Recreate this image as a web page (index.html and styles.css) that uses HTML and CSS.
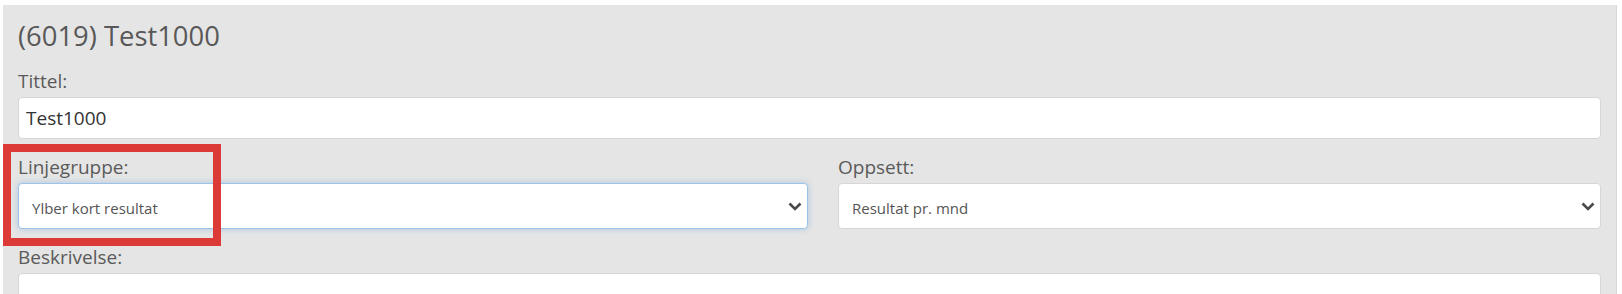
FILE: index.html
```html
<!DOCTYPE html>
<html lang="no">
<head>
<meta charset="utf-8">
<title>(6019) Test1000</title>
<link rel="stylesheet" href="styles.css">
</head>
<body>
<div class="panel">
  <h3 class="title">(6019) Test1000</h3>
  <div class="field">
    <label class="label" for="tittel">Tittel:</label>
    <input class="input" id="tittel" type="text" value="Test1000">
  </div>
  <div class="row">
    <div class="field">
      <label class="label" for="linjegruppe">Linjegruppe:</label>
      <div class="select-wrap focused">
        <select class="select" id="linjegruppe">
          <option>Ylber kort resultat</option>
        </select>
        <svg class="chevron" width="14" height="9" viewBox="0 0 14 9"><path d="M1.5 1.5 L7 7 L12.5 1.5" fill="none" stroke="#4a4a4a" stroke-width="2.6"/></svg>
      </div>
    </div>
    <div class="field">
      <label class="label" for="oppsett">Oppsett:</label>
      <div class="select-wrap">
        <select class="select" id="oppsett">
          <option>Resultat pr. mnd</option>
        </select>
        <svg class="chevron" width="14" height="9" viewBox="0 0 14 9"><path d="M1.5 1.5 L7 7 L12.5 1.5" fill="none" stroke="#4a4a4a" stroke-width="2.6"/></svg>
      </div>
    </div>
  </div>
  <div class="field">
    <label class="label" for="beskrivelse">Beskrivelse:</label>
    <textarea class="textarea" id="beskrivelse"></textarea>
  </div>
  <div class="highlight"></div>
</div>
</body>
</html>
```

FILE: styles.css
```css
* { box-sizing: border-box; }
html, body { margin: 0; padding: 0; background: #ffffff; overflow: hidden; }
body { font-family: "Open Sans", "Noto Sans", sans-serif; }

.panel {
  position: relative;
  margin: 5px 0 0 3px;
  width: 1614px;
  height: 289px;
  overflow: hidden;
  background: #e5e5e5;
  border-right: 1px solid #d8d8d8;
  padding: 13px 15px 0 15px;
}

.title {
  margin: 0 0 14px 0;
  font-size: 27.4px;
  line-height: 36px;
  font-weight: 400;
  color: #585858;
}

.field { margin-bottom: 15px; }

.label {
  display: block;
  font-size: 19px;
  line-height: 26px;
  color: #5a5a5a;
  margin-bottom: 3px;
}

.input {
  display: block;
  width: 100%;
  height: 42px;
  border: 1px solid #d6d6d6;
  border-radius: 4px;
  background: #fff;
  padding: 0 7px;
  font-family: "Open Sans", "Noto Sans", sans-serif;
  font-size: 19px;
  color: #333;
  outline: none;
}

.row {
  display: grid;
  grid-template-columns: 790px 1fr;
  column-gap: 30px;
}

.select-wrap {
  position: relative;
  height: 46px;
  border: 1px solid #d6d6d6;
  border-radius: 4px;
  background: #fff;
}
.select-wrap.focused {
  border-color: #9cc3ea;
  box-shadow: 0 0 6px rgba(102, 160, 220, 0.45);
}

.select {
  -webkit-appearance: none;
  appearance: none;
  display: block;
  width: 100%;
  height: 100%;
  border: 0;
  background: transparent;
  padding: 3px 30px 0 13px;
  font-family: "Open Sans", "Noto Sans", sans-serif;
  font-size: 15px;
  color: #555;
  outline: none;
}

.chevron {
  position: absolute;
  right: 5px;
  top: 18px;
  pointer-events: none;
}

.textarea {
  display: block;
  width: 100%;
  height: 80px;
  border: 1px solid #d6d6d6;
  border-radius: 4px;
  background: #fff;
  resize: none;
  outline: none;
}

.highlight {
  position: absolute;
  left: 0;
  top: 139px;
  width: 218px;
  height: 102px;
  border: 8px solid #db3a37;
  pointer-events: none;
}
```
